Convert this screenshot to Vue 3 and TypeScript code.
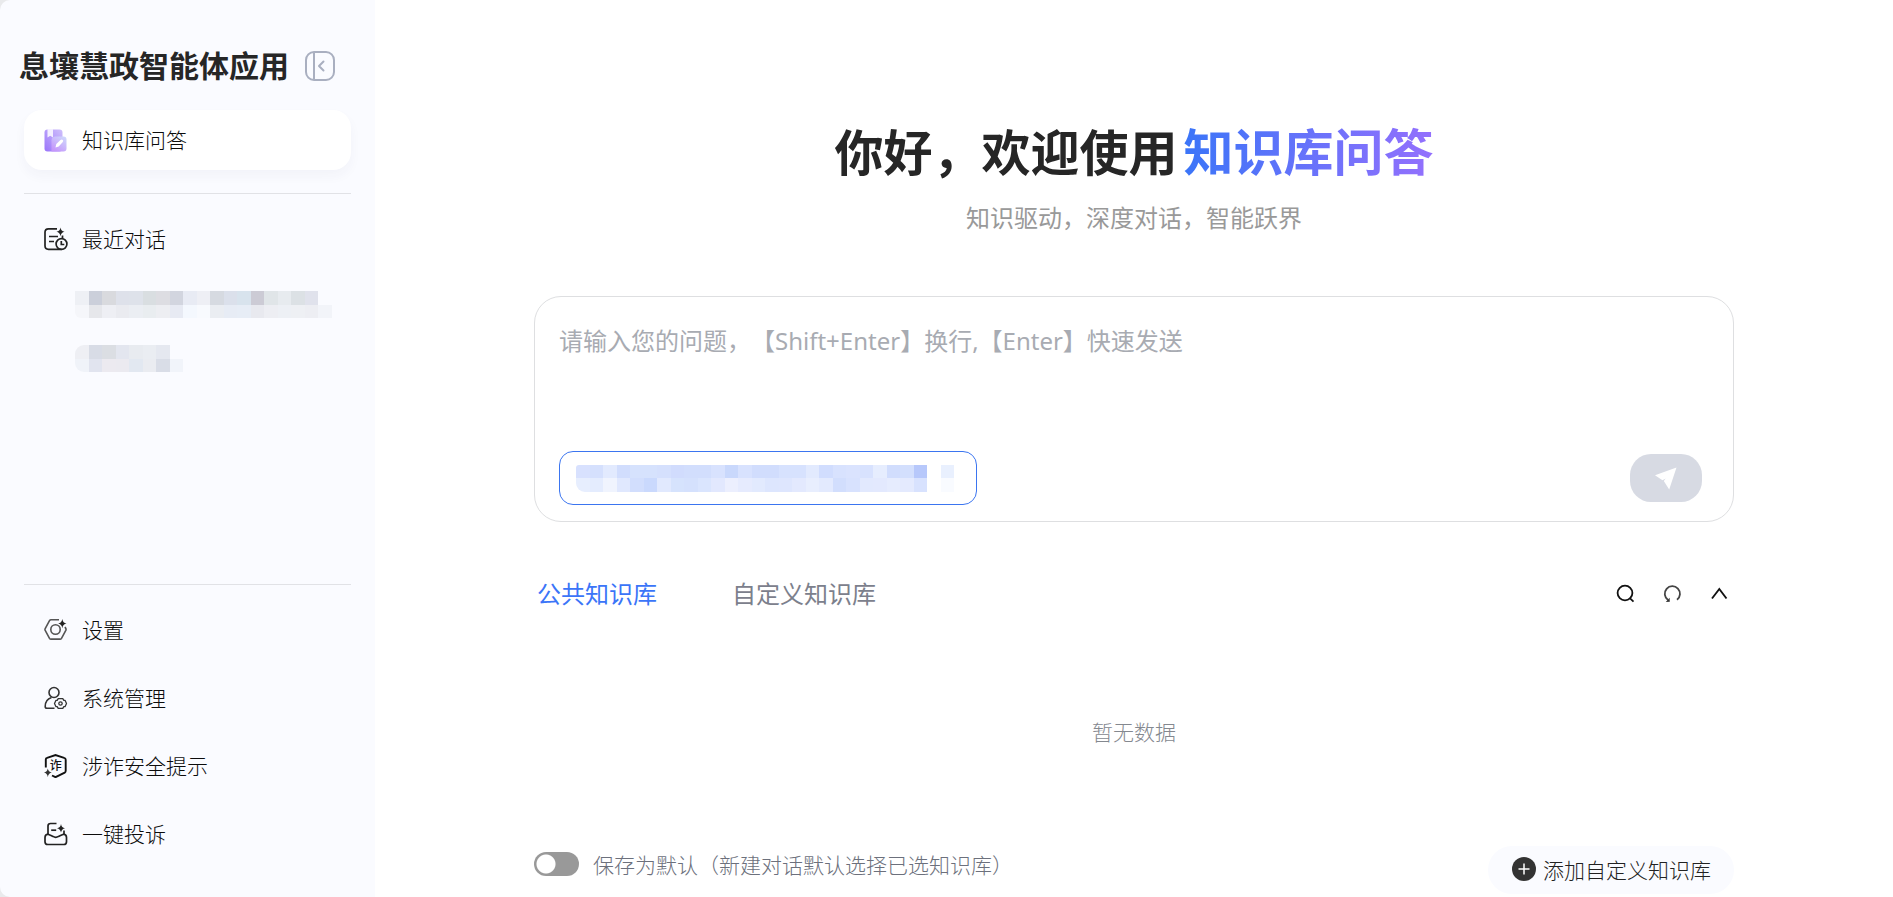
<script setup lang="ts">
import { ref } from 'vue'

type Cell = string | null

const question = ref('')
const saveDefault = ref(false)
const activeTab = ref(0)
const tabs = ['公共知识库', '自定义知识库']

const menu = [
  { icon: 'settings', label: '设置' },
  { icon: 'admin', label: '系统管理' },
  { icon: 'shield', label: '涉诈安全提示' },
  { icon: 'complaint', label: '一键投诉' },
]

const history: { columns: number; cells: Cell[] }[] = [
  {
    columns: 19,
    cells: [
      '#eef0f5', '#cbcfda', '#d9dade', '#dee1ea', '#dee2ea', '#d9dee1', '#dddde2', '#d2d5df', '#e8ebf4', '#eeeff5',
      '#d6dae1', '#dbe0eb', '#d8e3ed', '#cccbd5', '#e0e5e8', '#e7ebef', '#dce1e5', '#e0e2ec', null,
      '#f5f6fa', '#e6e7eb', '#eeeff4', '#eaebf0', '#ebeef3', '#e9edf0', '#edeef2', '#e7eaf3', '#f4f8fe', '#f8fafe',
      '#eaedf2', '#e7ecf5', '#e7edf6', '#e8e9ef', '#edeef3', '#edf0f5', '#eef0f4', '#edeef3', '#f2f4f9',
    ],
  },
  {
    columns: 8,
    cells: [
      '#eeeff4', '#d8dce6', '#dbdee3', '#e3e6ef', '#e8ebf0', '#eaedf2', '#e5e8f0', null,
      '#f0f3f9', '#e1e4ef', '#eceaf0', '#ebeaf0', '#e2e8f1', '#eaecf1', '#d9dde7', '#f1f4fa',
    ],
  },
]

const chipCells: Cell[] = [
  '#d8e1fe', '#d5e0fd', '#e2eafe', '#d1ddfd', '#d6e2fd', '#d6e2fd', '#d5e0fd', '#d1dcfd', '#d2defd', '#d2defd',
  '#d8e2fe', '#c9d8fc', '#d8e2fe', '#d1ddfd', '#d1ddfd', '#d7e2fe', '#d7e2fe', '#e2eafe', '#d1ddfe', '#d8e2fe',
  '#dae3fe', '#d8e2fe', '#e6edfe', '#d1ddfd', '#d3dffd', '#b7c8fb', null, '#e9f0fe',
  '#e7eefe', '#e4ecfe', '#f0f4fe', '#e0e8fe', '#d2defd', '#cad9fd', '#e1e9fe', '#d6e3fd', '#d5e1fd', '#dae5fe',
  '#e2e8fe', '#eceffe', '#e6ebfe', '#e2eafe', '#dde6fe', '#dee6fe', '#e3e9fe', '#e8eefe', '#e3eafe', '#d2defd',
  '#d8e2fe', '#e2e9fe', '#e3e9fe', '#e6ecfe', '#e4eafe', '#d8e2fe', null, '#f9fbff',
]
</script>

<template>
  <div class="app">
    <aside class="sidebar">
      <header class="brand">
        <h1>息壤慧政智能体应用</h1>
        <button class="plain" type="button" aria-label="收起侧栏">
          <svg width="30" height="30" viewBox="0 0 30 30" fill="none" stroke="#a9afc0" stroke-width="2">
            <rect x="1" y="1" width="28" height="28" rx="8" />
            <path d="M9 1.500v27" />
            <path d="M18.500 10.500 14 15l4.500 4.500" stroke-linecap="round" stroke-linejoin="round" />
          </svg>
        </button>
      </header>

      <button class="item current" type="button">
        <svg width="24" height="24" viewBox="0 0 24 24">
          <defs>
            <linearGradient id="book" x1="1" y1="0" x2="0" y2="1">
              <stop offset="0" stop-color="#cfc0fb" />
              <stop offset="1" stop-color="#9a74fa" />
            </linearGradient>
            <linearGradient id="folder" x1="1" y1="0" x2="0.300" y2="1">
              <stop offset="0" stop-color="#cfdcfc" />
              <stop offset="1" stop-color="#c597fb" />
            </linearGradient>
          </defs>
          <rect x="0.500" y="1.500" width="18" height="22" rx="3" fill="url(#book)" />
          <path d="M3.500 1H9v8.500L6.200 7.800 3.500 9.500z" fill="#f3efff" />
          <path d="M7.500 12.500q0-4 4-4h8q3 0 3 3v9q0 3-3 3h-12z" fill="url(#folder)" />
          <path d="M11.500 19.500l.8-3.500 4.200-4.100q1.500-.9 2.300.1.900 1.100-.2 2.300l-3.900 4.100z" fill="#fff" />
        </svg>
        <span>知识库问答</span>
      </button>

      <hr />

      <button class="item" type="button">
        <svg width="24" height="24" viewBox="0 0 24 24" fill="none" stroke="#222" stroke-width="1.700">
          <path d="M13 1.800H4.500Q1 1.800 1 5.300v13.500q0 3.500 3.500 3.500h13" />
          <path d="M5 9.500h9M5 14.500h5" />
          <circle cx="17.500" cy="17" r="5.400" />
          <path d="M17.300 14v3.500h3M18.500 8.500v3" />
          <path d="M16.500 .5q.6 3.800 4 4.300-3.400.6-4 4.400-.6-3.800-4-4.400 3.400-.5 4-4.300z" fill="#222" stroke="none" />
        </svg>
        <span>最近对话</span>
      </button>

      <ul class="history">
        <li v-for="(entry, i) in history" :key="i">
          <span class="mosaic" :class="entry.columns > 8 ? 'long' : 'short'">
            <i v-for="(c, n) in entry.cells" :key="n" :style="{ backgroundColor: c ?? 'transparent' }"></i>
          </span>
        </li>
      </ul>

      <nav class="bottom">
        <hr />
        <button v-for="m in menu" :key="m.icon" class="item" type="button">
          <svg v-if="m.icon === 'settings'" width="24" height="24" viewBox="0 0 24 24" fill="none" stroke="#555" stroke-width="1.600">
            <path d="M15 1.800H7q-1 0-1.500.8L1.200 10.500q-.5 1 0 1.900l4.300 7.900q.5.800 1.500.8h9q1 0 1.500-.8l4.300-7.900q.5-1 0-1.900l-.8-1.500" />
            <circle cx="11.500" cy="11.500" r="4.700" />
            <path d="M18.300 1q.6 4 4.200 4.600-3.600.6-4.200 4.600-.6-4-4.200-4.600 3.600-.6 4.200-4.600z" fill="#222" stroke="none" />
          </svg>
          <svg v-else-if="m.icon === 'admin'" width="24" height="24" viewBox="0 0 24 24" fill="none" stroke="#333" stroke-width="1.600">
            <circle cx="10" cy="6.500" r="5" />
            <path d="M7.500 11.500q-6.300 2-6.300 9 0 1.800 1.800 1.800h7.500" />
            <path d="M14.200 12.700h4.600l1 1.600H21l1.500 3.200-1.500 3.200h-1.200l-1 1.600h-4.600l-1-1.600H12l-1.500-3.200 1.500-3.200h1.200z" stroke-width="1.300" stroke-linejoin="round" />
            <circle cx="16.500" cy="17.500" r="1.700" stroke-width="1.300" />
          </svg>
          <svg v-else-if="m.icon === 'shield'" width="24" height="24" viewBox="0 0 24 24" fill="none" stroke="#111" stroke-width="1.900">
            <path d="M1.800 13.500v-8q0-1.300 1.300-1.600L11.500 1l8.600 2.900q1.600.3 1.600 1.800v11q0 1.300-1 1.900l-9.200 4.600L8 21.500" />
            <text x="11.800" y="15.800" text-anchor="middle" fill="#111" stroke="none" class="mark">诈</text>
            <path d="M3.800 14.500q.6 3.500 4 4-3.400.6-4 4.500-.6-3.900-3.800-4.500 3.200-.5 3.800-4z" fill="#333" stroke="none" />
          </svg>
          <svg v-else width="24" height="24" viewBox="0 0 24 24" fill="none" stroke="#222" stroke-width="1.700">
            <path d="M12.500 1.500H6.500Q4 1.500 4 4v8.500M20 8.500v4" />
            <path d="M4 12.200q-3 .3-3 3.300v4.200q0 2.800 2.800 2.800h15.900q2.800 0 2.800-2.800v-4.200q0-3-3-3.300-3.500 1.300-5 2.200-2.800 1.800-5.500 0-1.500-.9-5-2.200z" />
            <path d="M7.200 8.200h5" />
            <path d="M17 2q.6 3.700 4 4.300-3.400.6-4 4.300-.6-3.700-4-4.300 3.400-.6 4-4.300z" fill="#222" stroke="none" />
          </svg>
          <span>{{ m.label }}</span>
        </button>
      </nav>
    </aside>

    <main class="main">
      <div class="content">
        <h2>你好，欢迎使用<em>知识库问答</em></h2>
        <p class="tagline">知识驱动，深度对话，智能跃界</p>

        <form class="composer" @submit.prevent>
          <textarea
            v-model="question"
            aria-label="问题"
            placeholder="请输入您的问题，【Shift+Enter】换行,【Enter】快速发送"
          ></textarea>
          <div class="actions">
            <button class="chip" type="button" aria-label="已选知识库">
              <span class="mosaic selected">
                <i v-for="(c, n) in chipCells" :key="n" :style="{ backgroundColor: c ?? 'transparent' }"></i>
              </span>
            </button>
            <button class="send" type="submit" aria-label="发送">
              <svg width="24" height="24" viewBox="0 0 24 24" fill="#fff">
                <path d="M22.500 1.500 1 9.200l7.500 5 3.200-1.700-1.900 2.500 5.400 8.500z" />
              </svg>
            </button>
          </div>
        </form>

        <div class="toolbar">
          <div class="tabs" role="tablist">
            <button
              v-for="(t, i) in tabs"
              :key="t"
              type="button"
              role="tab"
              class="tab"
              :class="{ on: activeTab === i }"
              :aria-selected="activeTab === i"
              @click="activeTab = i"
            >{{ t }}</button>
          </div>
          <div class="tools">
            <button class="plain" type="button" aria-label="搜索">
              <svg width="20" height="20" viewBox="0 0 20 20" fill="none" stroke="#111" stroke-width="1.800">
                <circle cx="10" cy="9" r="7.400" />
                <path d="m14.500 13.800 4 3.800" />
              </svg>
            </button>
            <button class="plain" type="button" aria-label="刷新">
              <svg width="20" height="20" viewBox="0 0 20 20" fill="none" stroke="#444" stroke-width="1.800">
                <path d="M15 15.800A7.600 7.600 0 1 0 6 16" />
                <path d="m7.600 13.800.2 4-4 .1z" fill="#333" stroke="none" />
              </svg>
            </button>
            <button class="plain" type="button" aria-label="收起">
              <svg width="20" height="20" viewBox="0 0 20 20" fill="none" stroke="#111" stroke-width="1.900">
                <path d="m3 14.500 7.300-9.500 7.200 9.500" />
              </svg>
            </button>
          </div>
        </div>

        <p class="empty">暂无数据</p>

        <footer class="foot">
          <label class="save">
            <input v-model="saveDefault" type="checkbox" role="switch" />
            <span>保存为默认（新建对话默认选择已选知识库）</span>
          </label>
          <button class="add" type="button">
            <svg width="24" height="24" viewBox="0 0 24 24">
              <circle cx="12" cy="12" r="12" fill="#333" />
              <path d="M12 6.500v11M6.500 12h11" stroke="#fff" stroke-width="1.500" />
            </svg>
            <span>添加自定义知识库</span>
          </button>
        </footer>
      </div>
    </main>
  </div>
</template>

<style>
body {
  margin: 0;
  background: #fff;
}
</style>

<style scoped>
.app {
  display: flex;
  min-height: 100vh;
  background: linear-gradient(90deg, #e9eaec 24px, #fff 24px);
  font-family: "Noto Sans", "Noto Sans CJK SC", sans-serif;
  font-size: 21px;
  color: #262626;
  text-spacing-trim: space-all;
}
button {
  border: 0;
  background: none;
  padding: 0;
  font: inherit;
  color: inherit;
  cursor: pointer;
}
svg {
  display: block;
  flex: none;
}
hr {
  width: 100%;
  height: 1px;
  border: 0;
  margin: 0;
  background: #e1e2e6;
}
.sidebar {
  box-sizing: border-box;
  flex: none;
  display: flex;
  flex-direction: column;
  width: 375px;
  padding: 42px 24px 33px;
  background: #fafbff;
  border-radius: 10px 0 0 10px;
}
.brand {
  display: flex;
  align-items: center;
  gap: 16px;
  height: 48px;
  margin: 0 0 20px -5px;
}
.brand h1 {
  margin: 0;
  font-size: 30px;
  line-height: 48px;
  font-weight: 700;
  white-space: nowrap;
}
.item {
  display: flex;
  align-items: center;
  gap: 14px;
  width: 100%;
  height: 60px;
  padding: 0 20px;
  border-radius: 18px;
  font-weight: 300;
  line-height: 30px;
  text-align: left;
  color: #0c0c0c;
}
.current {
  margin-bottom: 23px;
  background: #fff;
  box-shadow: 0 6px 12px rgba(40, 50, 90, 0.04);
}
.current + hr {
  margin-bottom: 15px;
}
.mark {
  font-size: 12px;
  font-weight: 500;
}
.history {
  list-style: none;
  margin: 0;
  padding: 22px 0 0 51px;
  display: flex;
  flex-direction: column;
  gap: 27px;
}
.mosaic {
  display: grid;
  grid-auto-rows: 1fr;
  height: 27px;
  overflow: hidden;
}
.long {
  grid-template-columns: repeat(19, 1fr);
  width: 257px;
  border-radius: 0 0 0 6px;
}
.short {
  grid-template-columns: repeat(8, 1fr);
  width: 108px;
  border-radius: 9px 0 0 9px;
}
.selected {
  grid-template-columns: repeat(28, 1fr);
  width: 378px;
  border-radius: 3px 0 0 9px;
}
.bottom {
  margin-top: auto;
  display: flex;
  flex-direction: column;
  gap: 8px;
}
.bottom hr {
  margin-bottom: 7px;
}
.main {
  flex: 1;
  display: flex;
  justify-content: center;
  padding: 0 24px;
  background: #fff;
}
.content {
  box-sizing: border-box;
  display: flex;
  flex-direction: column;
  width: 100%;
  max-width: 1200px;
  padding: 122px 0 3px;
}
h2 {
  margin: 0;
  font-size: 49px;
  line-height: 60px;
  font-weight: 700;
  text-align: center;
}
h2 em {
  margin-left: 6px;
  font-size: 50px;
  font-style: normal;
  color: transparent;
  background: linear-gradient(90deg, #3b75f8, #9470fd);
  background-clip: text;
}
.tagline {
  margin: 18px 0 60px;
  font-size: 24px;
  line-height: 36px;
  text-align: center;
  color: #999;
}
.composer {
  box-sizing: border-box;
  display: flex;
  flex-direction: column;
  height: 226px;
  padding: 26px 31px 16px 24px;
  border: 1px solid #dedfe1;
  border-radius: 27px;
}
textarea {
  flex: 1;
  display: block;
  border: 0;
  padding: 0;
  margin: 0;
  outline: 0;
  resize: none;
  background: none;
  font: inherit;
  font-size: 24px;
  line-height: 36px;
  color: #262626;
}
textarea::placeholder {
  color: #a8abb2;
  opacity: 1;
}
.actions {
  display: flex;
  align-items: center;
  justify-content: space-between;
}
.chip {
  box-sizing: border-box;
  width: 418px;
  height: 54px;
  padding: 0 16px;
  border: 1px solid #3b75f0;
  border-radius: 14px;
}
.send {
  display: flex;
  align-items: center;
  justify-content: center;
  width: 72px;
  height: 48px;
  border-radius: 21px;
  background: #d7dae3;
}
.toolbar {
  display: flex;
  align-items: center;
  justify-content: space-between;
  margin-top: 54px;
  padding: 0 5px 0 3px;
}
.tabs {
  display: flex;
  gap: 75px;
}
.tab {
  font-size: 24px;
  line-height: 36px;
  color: #7c808c;
}
.tab.on {
  color: #3b75f8;
}
.tools {
  display: flex;
  gap: 27px;
}
.empty {
  flex: 1;
  display: flex;
  align-items: center;
  justify-content: center;
  margin: 4px 0 0;
  font-weight: 300;
  color: #84888f;
}
.foot {
  display: flex;
  align-items: flex-start;
  justify-content: space-between;
}
.save {
  display: flex;
  align-items: center;
  gap: 14px;
  height: 36px;
  font-weight: 300;
  color: #6c707c;
}
.save input {
  appearance: none;
  flex: none;
  width: 45px;
  height: 24px;
  margin: 0;
  border-radius: 12px;
  background: radial-gradient(circle at 12px 12px, #fff 9px, #999 10px);
}
.save input:checked {
  background: radial-gradient(circle at 33px 12px, #fff 9px, #3b75f8 10px);
}
.add {
  display: flex;
  align-items: center;
  gap: 7px;
  height: 48px;
  padding: 0 23px 2px 24px;
  border-radius: 24px;
  background: #fafbff;
  font-weight: 300;
  color: #222;
}
</style>
